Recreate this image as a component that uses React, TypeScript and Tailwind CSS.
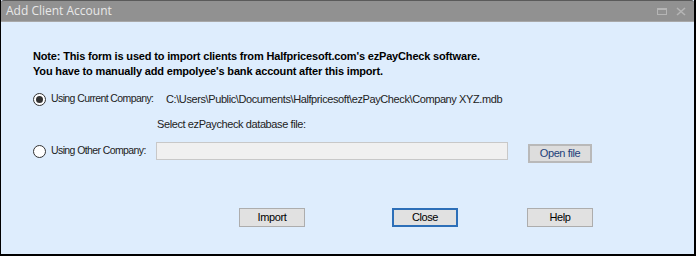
import React from "react";

function Radio({ checked }: { checked?: boolean }) {
  return (
    <span className="w-[13px] h-[13px] rounded-full border border-[#333] bg-white flex items-center justify-center shrink-0">
      {checked ? <span className="w-[7px] h-[7px] rounded-full bg-[#333]" /> : null}
    </span>
  );
}

function Btn({ label, focused }: { label: string; focused?: boolean }) {
  return (
    <div
      className={
        "w-[66px] h-[19px] flex items-center justify-center text-[11px] tracking-[-0.4px] text-black bg-[#e1e1e1] " +
        (focused ? "border-2 border-[#2d6fb8]" : "border border-[#adadad]")
      }
    >
      {label}
    </div>
  );
}

export default function App() {
  return (
    <div
      className="w-[696px] h-[256px] bg-[#deedfd] border-l border-r-2 border-b-2 border-black flex flex-col overflow-hidden"
      style={{ fontFamily: '"Liberation Sans", Arial, sans-serif' }}
    >
      <div className="h-[22px] shrink-0 bg-[#919191] border-t border-[#5a5a5a] rounded-t-[3px] flex items-center justify-between pl-[5px] pr-[8px] border-b border-b-[#a8a8a8]">
        <span className="text-[12px] text-[#e8e8e8]" style={{ fontFamily: '"Open Sans", "Liberation Sans", sans-serif' }}>
          Add Client Account
        </span>
        <div className="flex items-center gap-[9px]">
          <span className="w-[10px] h-[7px] border border-[#b5b5b5] border-t-2" />
          <svg width="10" height="9" viewBox="0 0 10 9">
            <path d="M1 1 L9 8 M9 1 L1 8" stroke="#b5b5b5" strokeWidth="1.6" />
          </svg>
        </div>
      </div>
      <div className="flex-1 pl-[32px] pt-[27px] text-[11px] tracking-[-0.4px] text-black whitespace-nowrap">
        <div className="font-bold leading-[15px] text-[11px] tracking-[-0.17px]">
          <div>Note: This form is used to import clients from Halfpricesoft.com's ezPayCheck software.</div>
          <div>You have to manually add empolyee's bank account after this import.</div>
        </div>
        <div className="mt-[13px] h-[14px] flex items-center">
          <div className="w-[123px] shrink-0 flex items-center gap-[5px]">
            <Radio checked />
            <span className="text-[#222] text-[10.5px] tracking-[-0.6px]">Using Current Company:</span>
          </div>
          <span className="ml-[10px] text-[#222]">C:\Users\Public\Documents\Halfpricesoft\ezPayCheck\Company XYZ.mdb</span>
        </div>
        <div className="mt-[11px] h-[14px] flex items-center pl-[124px] text-[#222]">Select ezPaycheck database file:</div>
        <div className="mt-[10px] h-[20px] flex items-center">
          <div className="w-[123px] shrink-0 flex items-center gap-[5px]">
            <Radio />
            <span className="text-[#222] text-[10.5px] tracking-[-0.6px]">Using Other Company:</span>
          </div>
          <div className="w-[352px] h-[18px] bg-[#f0f0f0] border border-[#c8c8c8]" />
          <div className="ml-[20px] mt-[4px] w-[64px] h-[19px] flex items-center justify-center bg-[#dddddd] border-2 border-[#b9b9b9] text-[#1d3f7a]">
            Open file
          </div>
        </div>
        <div className="mt-[47px] flex items-center pl-[206px]">
          <Btn label="Import" />
          <div className="ml-[87px]">
            <Btn label="Close" focused />
          </div>
          <div className="ml-[69px]">
            <Btn label="Help" />
          </div>
        </div>
      </div>
    </div>
  );
}
